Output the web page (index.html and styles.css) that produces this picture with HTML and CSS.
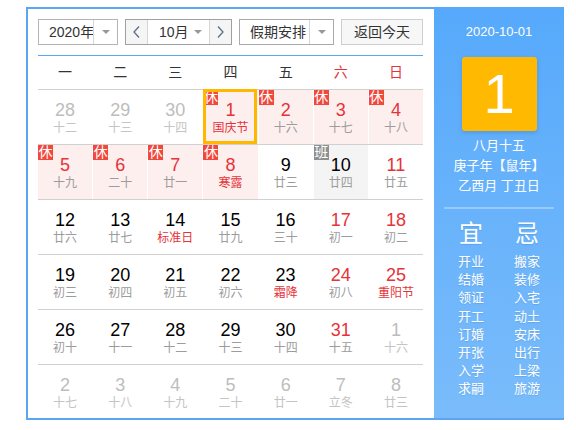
FILE: index.html
```html
<!DOCTYPE html>
<html lang="zh-CN">
<head>
<meta charset="utf-8">
<title>万年历</title>
<link rel="stylesheet" href="styles.css">
</head>
<body>
<div class="cal">
  <div class="main">
    <div class="toolbar">
      <div class="sel sel-year"><span class="sel-text">2020年</span><span class="sel-arrow"><i class="tri"></i></span></div>
      <div class="month">
        <span class="mbtn"><svg width="7" height="12" viewBox="0 0 7 12"><polyline points="6,0.5 1,6 6,11.5" fill="none" stroke="#5f6e84" stroke-width="1.3"/></svg></span>
        <span class="mmid"><span>10月</span><i class="tri"></i></span>
        <span class="mbtn"><svg width="7" height="12" viewBox="0 0 7 12"><polyline points="1,0.5 6,6 1,11.5" fill="none" stroke="#5f6e84" stroke-width="1.3"/></svg></span>
      </div>
      <div class="sel sel-hol"><span class="sel-text">假期安排</span><span class="sel-arrow"><i class="tri"></i></span></div>
      <div class="today">返回今天</div>
    </div>
    <div class="weekhead">
      <span>一</span><span>二</span><span>三</span><span>四</span><span>五</span><span class="we">六</span><span class="we">日</span>
    </div>
    <div class="row">
      <div class="cell other"><span class="num">28</span><span class="lunar">十二</span></div>
      <div class="cell other"><span class="num">29</span><span class="lunar">十三</span></div>
      <div class="cell other"><span class="num">30</span><span class="lunar">十四</span></div>
      <div class="cell hol red fest selected"><span class="badge">休</span><span class="num">1</span><span class="lunar">国庆节</span></div>
      <div class="cell hol red"><span class="badge">休</span><span class="num">2</span><span class="lunar">十六</span></div>
      <div class="cell hol red"><span class="badge">休</span><span class="num">3</span><span class="lunar">十七</span></div>
      <div class="cell hol red"><span class="badge">休</span><span class="num">4</span><span class="lunar">十八</span></div>
    </div>
    <div class="row">
      <div class="cell hol red"><span class="badge">休</span><span class="num">5</span><span class="lunar">十九</span></div>
      <div class="cell hol red"><span class="badge">休</span><span class="num">6</span><span class="lunar">二十</span></div>
      <div class="cell hol red"><span class="badge">休</span><span class="num">7</span><span class="lunar">廿一</span></div>
      <div class="cell hol red fest"><span class="badge">休</span><span class="num">8</span><span class="lunar">寒露</span></div>
      <div class="cell"><span class="num">9</span><span class="lunar">廿三</span></div>
      <div class="cell work"><span class="badge badge-work">班</span><span class="num">10</span><span class="lunar">廿四</span></div>
      <div class="cell red"><span class="num">11</span><span class="lunar">廿五</span></div>
    </div>
    <div class="row">
      <div class="cell"><span class="num">12</span><span class="lunar">廿六</span></div>
      <div class="cell"><span class="num">13</span><span class="lunar">廿七</span></div>
      <div class="cell fest"><span class="num">14</span><span class="lunar">标准日</span></div>
      <div class="cell"><span class="num">15</span><span class="lunar">廿九</span></div>
      <div class="cell"><span class="num">16</span><span class="lunar">三十</span></div>
      <div class="cell red"><span class="num">17</span><span class="lunar">初一</span></div>
      <div class="cell red"><span class="num">18</span><span class="lunar">初二</span></div>
    </div>
    <div class="row">
      <div class="cell"><span class="num">19</span><span class="lunar">初三</span></div>
      <div class="cell"><span class="num">20</span><span class="lunar">初四</span></div>
      <div class="cell"><span class="num">21</span><span class="lunar">初五</span></div>
      <div class="cell"><span class="num">22</span><span class="lunar">初六</span></div>
      <div class="cell fest"><span class="num">23</span><span class="lunar">霜降</span></div>
      <div class="cell red"><span class="num">24</span><span class="lunar">初八</span></div>
      <div class="cell red fest"><span class="num">25</span><span class="lunar">重阳节</span></div>
    </div>
    <div class="row">
      <div class="cell"><span class="num">26</span><span class="lunar">初十</span></div>
      <div class="cell"><span class="num">27</span><span class="lunar">十一</span></div>
      <div class="cell"><span class="num">28</span><span class="lunar">十二</span></div>
      <div class="cell"><span class="num">29</span><span class="lunar">十三</span></div>
      <div class="cell"><span class="num">30</span><span class="lunar">十四</span></div>
      <div class="cell red"><span class="num">31</span><span class="lunar">十五</span></div>
      <div class="cell other"><span class="num">1</span><span class="lunar">十六</span></div>
    </div>
    <div class="row">
      <div class="cell other"><span class="num">2</span><span class="lunar">十七</span></div>
      <div class="cell other"><span class="num">3</span><span class="lunar">十八</span></div>
      <div class="cell other"><span class="num">4</span><span class="lunar">十九</span></div>
      <div class="cell other"><span class="num">5</span><span class="lunar">二十</span></div>
      <div class="cell other"><span class="num">6</span><span class="lunar">廿一</span></div>
      <div class="cell other"><span class="num">7</span><span class="lunar">立冬</span></div>
      <div class="cell other"><span class="num">8</span><span class="lunar">廿三</span></div>
    </div>
  </div>
  <div class="panel">
    <div class="p-date">2020-10-01</div>
    <div class="p-day">1</div>
    <div class="p-lunar">
      <div>八月十五</div>
      <div>庚子年【鼠年】</div>
      <div>乙酉月 丁丑日</div>
    </div>
    <div class="p-line"></div>
    <div class="p-yj">
      <div class="yj-col">
        <div class="yj-head">宜</div>
        <div>开业</div><div>结婚</div><div>领证</div><div>开工</div><div>订婚</div><div>开张</div><div>入学</div><div>求嗣</div>
      </div>
      <div class="yj-col">
        <div class="yj-head">忌</div>
        <div>搬家</div><div>装修</div><div>入宅</div><div>动土</div><div>安床</div><div>出行</div><div>上梁</div><div>旅游</div>
      </div>
    </div>
  </div>
</div>
</body>
</html>
```
FILE: styles.css
```css
body {
  margin: 0;
  background: #fff;
  font-family: "Liberation Sans", "Noto Sans CJK SC", sans-serif;
  color: #000;
}

.cal {
  display: flex;
  width: 538px;
  height: 413px;
  box-sizing: border-box;
  margin: 7px 0 0 26px;
  border-bottom: 2px solid #5aa6f3;
}

.main {
  width: 408px;
  box-sizing: border-box;
  border-left: 2px solid #5aa6f3;
  border-top: 2px solid #5aa6f3;
  padding: 10px 11px 0 10px;
  overflow: hidden;
}

/* toolbar */
.toolbar {
  display: flex;
  gap: 7px;
  height: 26px;
  font-size: 14px;
  color: #333;
}

.sel {
  display: flex;
  box-sizing: border-box;
  height: 26px;
  border: 1px solid #b4b4b4;
  background: #fff;
}
.sel-year { width: 80px; }
.sel-year .sel-text { width: 54px; }
.sel-hol { width: 95px; border-color: #aaa; }
.sel-hol .sel-text { width: 69px; }

.sel-text {
  box-sizing: border-box;
  padding-left: 10px;
  line-height: 24px;
  white-space: nowrap;
}
.sel-arrow {
  width: 23px;
  border-left: 1px solid #d6d6d6;
  display: flex;
  align-items: center;
  justify-content: center;
}

.tri {
  display: block;
  width: 0;
  height: 0;
  border-left: 4px solid transparent;
  border-right: 4px solid transparent;
  border-top: 4px solid #999;
}

.month {
  display: flex;
  box-sizing: border-box;
  width: 107px;
  height: 26px;
  border: 1px solid #a0a0a0;
}
.mbtn {
  width: 21px;
  background: #f5f5f5;
  display: flex;
  align-items: center;
  justify-content: center;
}
.mmid {
  border-left: 1px solid #d6d6d6;
  border-right: 1px solid #d6d6d6;
  display: flex;
  align-items: center;
  padding: 0 7px 0 11px;
  box-sizing: content-box;
  width: 43px;
  line-height: 24px;
}
.mmid .tri { margin-left: auto; }

.today {
  box-sizing: border-box;
  width: 82px;
  height: 26px;
  border: 1px solid #cfcfcf;
  background: #f7f7f7;
  text-align: center;
  line-height: 24px;
}

/* week header */
.weekhead {
  margin-top: 10px;
  border-top: 1px solid #5aa6f3;
  display: grid;
  grid-template-columns: repeat(7, 1fr);
  gap: 1px;
  height: 33px;
  line-height: 33px;
  font-size: 14px;
  color: #333;
  text-align: center;
}
.weekhead .we { color: #e5333a; }

/* rows */
.row {
  display: grid;
  grid-template-columns: repeat(7, 1fr);
  gap: 1px;
  border-top: 1px solid #d0d0d0;
}

.cell {
  position: relative;
  height: 54px;
  display: flex;
  flex-direction: column;
  align-items: center;
  background: #fff;
}
.cell.hol { background: #fdefee; }
.cell.work { background: #f4f4f4; }

.num {
  margin-top: 10px;
  font-size: 18px;
  line-height: 20px;
  color: #000;
}
.lunar {
  font-size: 12px;
  line-height: 16px;
  color: #9c9c9c;
  white-space: nowrap;
}

.cell.red .num { color: #e5333a; }
.cell.fest .lunar { color: #e5333a; }
.cell.other .num { color: #bdbdbd; }
.cell.other .lunar { color: #c4c4c4; }

.badge {
  position: absolute;
  top: 0;
  left: 0;
  width: 15px;
  height: 15px;
  background: #f2473b;
  color: #fff;
  font-size: 14px;
  line-height: 15px;
  text-align: center;
  overflow: hidden;
}
.badge-work { background: #8f8f8f; }

.cell.selected::after {
  content: "";
  position: absolute;
  top: -1px;
  left: 0;
  right: 1px;
  bottom: 0;
  border: 3px solid #ffb800;
}

/* side panel */
.panel {
  width: 130px;
  background: linear-gradient(#56a9fb, #7abcfb);
  color: #fff;
  display: flex;
  flex-direction: column;
  align-items: center;
  padding-top: 16px;
  box-sizing: border-box;
}
.p-date {
  font-size: 13px;
  line-height: 18px;
}
.p-day {
  margin-top: 16px;
  width: 75px;
  height: 74px;
  border-radius: 3px;
  background: #ffb900;
  box-shadow: 0 2px 4px rgba(0, 60, 140, 0.18);
  font-size: 56px;
  line-height: 74px;
  text-align: center;
}
.p-lunar {
  margin-top: 5px;
  font-size: 13px;
  line-height: 20px;
  text-align: center;
  white-space: nowrap;
}
.p-line {
  margin-top: 11px;
  width: 110px;
  height: 2px;
  background: rgba(255, 255, 255, 0.32);
}
.p-yj {
  display: flex;
  margin-top: 10px;
}
.yj-col {
  width: 56px;
  text-align: center;
  font-size: 13px;
  line-height: 18.2px;
  text-shadow: 0 1px 1px rgba(0, 40, 100, 0.12);
}
.yj-head {
  font-size: 24px;
  line-height: 30px;
  margin-bottom: 4px;
}
```
